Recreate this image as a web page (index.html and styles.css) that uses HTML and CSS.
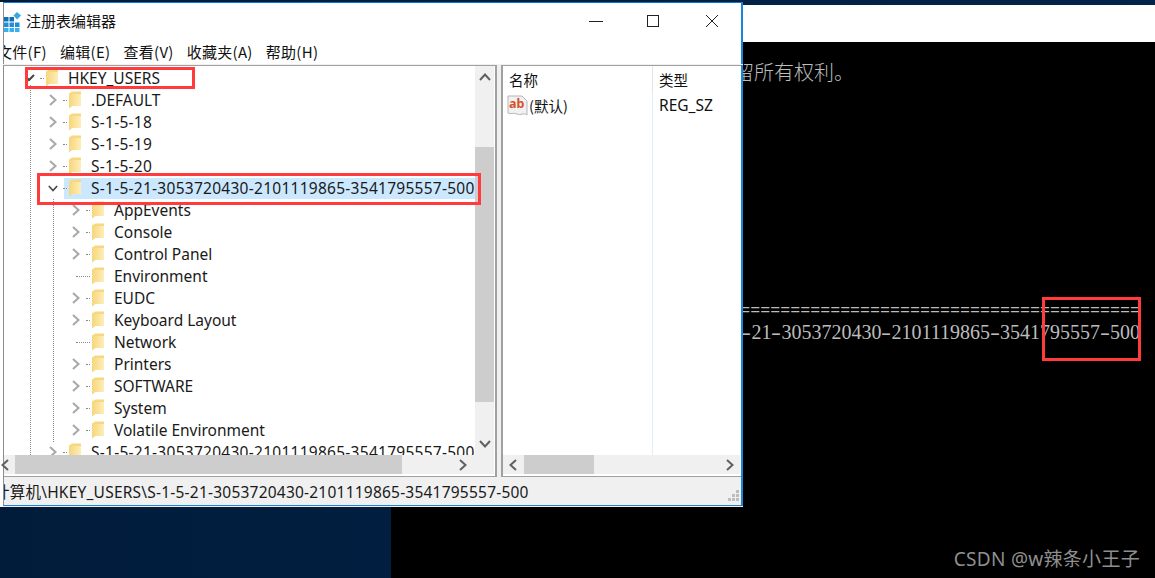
FILE: index.html
```html
<!DOCTYPE html>
<html lang="zh-CN">
<head>
<meta charset="utf-8">
<title>注册表编辑器</title>
<link rel="stylesheet" href="styles.css">
</head>
<body>
<svg class="defs" width="0" height="0" aria-hidden="true">
  <defs>
    <linearGradient id="fg" x1="0" y1="0" x2="1" y2="0">
      <stop offset="0" stop-color="#f7d67c"/><stop offset="1" stop-color="#fdeeb8"/>
    </linearGradient>
    <symbol id="folder" viewBox="0 0 12 18">
      <path d="M0 2.5 L3 0.5 H12 V15 H3 L0 17.5Z" fill="#f7d87f"/>
      <path d="M3 3 H12 V15 H3 L0 17.5 V5.5Z" fill="url(#fg)"/>
    </symbol>
    <symbol id="right" viewBox="0 0 8 12"><path d="M1 1 L6.5 6 L1 11" fill="none" stroke="currentColor" stroke-width="2"/></symbol>
    <symbol id="left" viewBox="0 0 8 12"><path d="M7 1 L1.5 6 L7 11" fill="none" stroke="currentColor" stroke-width="2"/></symbol>
    <symbol id="up" viewBox="0 0 12 8"><path d="M1 7 L6 1.5 L11 7" fill="none" stroke="currentColor" stroke-width="2"/></symbol>
    <symbol id="down" viewBox="0 0 12 8"><path d="M1 1 L6 6.5 L11 1" fill="none" stroke="currentColor" stroke-width="2"/></symbol>
  </defs>
</svg>

<main class="desktop">
  <section class="console">
    <div class="console-title"></div>
    <div class="console-body">
      <div class="c-line c-rights">保留所有权利。</div>
      <div class="c-line c-rule">=======================================================================================</div>
      <div class="c-line c-sid">S<span class="dash">-</span>1<span class="dash">-</span>5<span class="dash">-</span>21<span class="dash">-</span>3053720430<span class="dash">-</span>2101119865<span class="dash">-</span>3541795557<span class="dash">-</span>500</div>
    </div>
  </section>

  <section class="regedit">
    <header class="titlebar">
      <svg class="app-icon" width="18" height="20" viewBox="0 0 18 20">
        <g fill="#1e8fd8">
          <rect x="0" y="5" width="4.5" height="4.5" fill="#0f6fb8"/><rect x="5.5" y="5" width="4.5" height="4.5" fill="#0f6fb8"/>
          <rect x="0" y="10.5" width="4.5" height="4.5"/><rect x="5.5" y="10.5" width="4.5" height="4.5"/><rect x="11" y="10.5" width="4.5" height="4.5"/>
          <rect x="0" y="16" width="4.5" height="4" fill="#36b1ee"/><rect x="5.5" y="16" width="4.5" height="4" fill="#36b1ee"/><rect x="11" y="16" width="4.5" height="4" fill="#36b1ee"/>
        </g>
        <path d="M13 0 L17 3.5 L13 7.5 L9.5 3.5Z" fill="#3ba7e0"/>
      </svg>
      <span class="app-title">注册表编辑器</span>
      <div class="win-btns">
        <svg class="btn-min" width="14" height="14" viewBox="0 0 14 14"><path d="M0 7.5 H14" stroke="#222" fill="none"/></svg>
        <svg class="btn-max" width="13" height="13" viewBox="0 0 13 13"><rect x="1.5" y="1.5" width="11" height="11" stroke="#222" fill="none"/></svg>
        <svg class="btn-close" width="14" height="14" viewBox="0 0 14 14"><path d="M1 1 L13 13 M13 1 L1 13" stroke="#222" fill="none"/></svg>
      </div>
    </header>
    <nav class="menubar">
      <span class="m1">文件(F)</span><span class="m2">编辑(E)</span><span class="m3">查看(V)</span><span class="m4">收藏夹(A)</span><span class="m5">帮助(H)</span>
    </nav>

    <div class="panes">
      <div class="pane pane-tree">
        <div class="tree">
          <i class="guide g0"></i><i class="guide g1"></i>
          <div class="row l0"><svg class="exp0" width="14" height="8" viewBox="0 0 14 8"><path d="M3 3 L6 6 L11 1" fill="none" stroke="#444" stroke-width="2"/></svg><i class="twig"></i><span class="node"><svg class="fld"><use href="#folder"/></svg><span>HKEY_USERS</span></span></div>
          <div class="row l1"><svg class="chev"><use href="#right"/></svg><i class="twig"></i><span class="node"><svg class="fld"><use href="#folder"/></svg><span>.DEFAULT</span></span></div>
          <div class="row l1"><svg class="chev"><use href="#right"/></svg><i class="twig"></i><span class="node"><svg class="fld"><use href="#folder"/></svg><span class="num">S-1-5-18</span></span></div>
          <div class="row l1"><svg class="chev"><use href="#right"/></svg><i class="twig"></i><span class="node"><svg class="fld"><use href="#folder"/></svg><span class="num">S-1-5-19</span></span></div>
          <div class="row l1"><svg class="chev"><use href="#right"/></svg><i class="twig"></i><span class="node"><svg class="fld"><use href="#folder"/></svg><span class="num">S-1-5-20</span></span></div>
          <div class="row l1 sel"><svg class="chev open"><use href="#down"/></svg><i class="twig"></i><span class="node"><svg class="fld"><use href="#folder"/></svg><span class="num">S-1-5-21-3053720430-2101119865-3541795557-500</span></span></div>
          <div class="row l2"><svg class="chev"><use href="#right"/></svg><i class="twig"></i><span class="node"><svg class="fld"><use href="#folder"/></svg><span>AppEvents</span></span></div>
          <div class="row l2"><svg class="chev"><use href="#right"/></svg><i class="twig"></i><span class="node"><svg class="fld"><use href="#folder"/></svg><span>Console</span></span></div>
          <div class="row l2"><svg class="chev"><use href="#right"/></svg><i class="twig"></i><span class="node"><svg class="fld"><use href="#folder"/></svg><span>Control Panel</span></span></div>
          <div class="row l2"><svg class="chev"></svg><i class="twig long"></i><span class="node"><svg class="fld"><use href="#folder"/></svg><span>Environment</span></span></div>
          <div class="row l2"><svg class="chev"><use href="#right"/></svg><i class="twig"></i><span class="node"><svg class="fld"><use href="#folder"/></svg><span>EUDC</span></span></div>
          <div class="row l2"><svg class="chev"><use href="#right"/></svg><i class="twig"></i><span class="node"><svg class="fld"><use href="#folder"/></svg><span>Keyboard Layout</span></span></div>
          <div class="row l2"><svg class="chev"></svg><i class="twig long"></i><span class="node"><svg class="fld"><use href="#folder"/></svg><span>Network</span></span></div>
          <div class="row l2"><svg class="chev"><use href="#right"/></svg><i class="twig"></i><span class="node"><svg class="fld"><use href="#folder"/></svg><span>Printers</span></span></div>
          <div class="row l2"><svg class="chev"><use href="#right"/></svg><i class="twig"></i><span class="node"><svg class="fld"><use href="#folder"/></svg><span>SOFTWARE</span></span></div>
          <div class="row l2"><svg class="chev"><use href="#right"/></svg><i class="twig"></i><span class="node"><svg class="fld"><use href="#folder"/></svg><span>System</span></span></div>
          <div class="row l2"><svg class="chev"><use href="#right"/></svg><i class="twig"></i><span class="node"><svg class="fld"><use href="#folder"/></svg><span>Volatile Environment</span></span></div>
          <div class="row l1"><svg class="chev"><use href="#right"/></svg><i class="twig"></i><span class="node"><svg class="fld"><use href="#folder"/></svg><span class="num">S-1-5-21-3053720430-2101119865-3541795557-500</span></span></div>
        </div>
        <div class="vscroll">
          <svg class="arrow-v"><use href="#up"/></svg>
          <div class="vtrack"><div class="vthumb"></div></div>
          <svg class="arrow-v"><use href="#down"/></svg>
        </div>
        <div class="hscroll hs-tree">
          <svg class="arrow-h"><use href="#left"/></svg>
          <div class="htrack"><div class="hthumb ht-tree"></div></div>
          <svg class="arrow-h"><use href="#right"/></svg>
        </div>
      </div>

      <div class="pane pane-list">
        <div class="list-head"><span class="col-a">名称</span><span class="col-b">类型</span></div>
        <div class="list-body">
          <div class="list-row">
            <span class="col-a name-cell">
              <svg class="ab-icon" width="21" height="21" viewBox="0 0 21 21">
                <path d="M1 1 H15 L20 6 V20 C16 17 14 21 10 19 C6 17 4 20 1 18Z" fill="#f1f1f1" stroke="#b5b5b5"/>
                <text x="2" y="13" class="ab-text">ab</text>
              </svg>
              <span>(默认)</span>
            </span>
            <span class="col-b">REG_SZ</span>
          </div>
        </div>
        <div class="hscroll hs-list">
          <svg class="arrow-h"><use href="#left"/></svg>
          <div class="htrack"><div class="hthumb ht-list"></div></div>
          <svg class="arrow-h"><use href="#right"/></svg>
        </div>
      </div>
    </div>

    <footer class="statusbar">
      <span class="path">计算机\HKEY_USERS\S-1-5-21-3053720430-2101119865-3541795557-500</span>
      <svg class="grip" width="12" height="12" viewBox="0 0 12 12" fill="#bdbdbd">
        <rect x="8" y="0" width="3" height="3"/><rect x="4" y="4" width="3" height="3"/><rect x="8" y="4" width="3" height="3"/>
        <rect x="0" y="8" width="3" height="3"/><rect x="4" y="8" width="3" height="3"/><rect x="8" y="8" width="3" height="3"/>
      </svg>
    </footer>
  </section>

  <div class="mark mark-root"></div>
  <div class="mark mark-sid"></div>
  <div class="mark mark-console"></div>
  <div class="watermark">CSDN @w辣条小王子</div>
</main>
</body>
</html>
```
FILE: styles.css
```css
* { box-sizing: border-box; }
html, body { margin: 0; height: 100%; overflow: hidden; }
.defs { position: absolute; }
body { font-family: "Noto Sans", "Noto Sans CJK SC", sans-serif; }

.desktop {
  position: relative;
  width: 1155px;
  height: 578px;
  overflow: hidden;
  background: linear-gradient(90deg, #011c3b, #02234a);
}

/* console window behind */
.console {
  position: absolute;
  left: 391px;
  top: 5px;
  width: 764px;
  height: 573px;
  display: flex;
  flex-direction: column;
}
.console-title { height: 37px; background: #fff; }
.console-body {
  flex: 1;
  background: #000;
  color: #bcbcbc;
  position: relative;
  overflow: hidden;
  padding-right: 15px;
}
.c-line { white-space: nowrap; overflow: hidden; text-align: right; }
.c-rights {
  font: 300 20px/24px "Noto Sans CJK SC", sans-serif;
  margin-top: 18px;
  width: 463px;
  color: #bdbdbd;
}
.c-rule {
  font: 16.67px/16px "Liberation Mono", monospace;
  margin-top: 219px;
  direction: rtl;
}
.c-sid {
  font: 20px/24px "Liberation Serif", serif;
  margin-top: 1px;
}
.dash {
  display: inline-block;
  width: 10px;
  text-align: center;
  transform: scaleX(1.5);
}

/* registry editor */
.regedit {
  position: absolute;
  left: 0;
  top: 2px;
  width: 743px;
  height: 505px;
  padding-left: 3px;
  display: flex;
  flex-direction: column;
  background: linear-gradient(90deg, #fff 3px, #f0f0f0 3px);
  color: #111;
  font-size: 15.5px;
}
.regedit > * { border-left: 1px solid #8d8d8d; border-right: 2px solid #1a84d8; }
.titlebar {
  height: 38px;
  flex: none;
  background: #fff;
  border-top: 1px solid #0a78d4;
  padding-bottom: 2px;
  display: flex;
  align-items: center;
}
.app-icon { margin-top: 2px; flex: none; }
.app-title {
  margin-left: 4px;
  font: 15px "Noto Sans CJK SC", sans-serif;
  color: #111;
}
.win-btns {
  margin-left: auto;
  margin-right: 22px;
  display: flex;
  align-items: center;
}
.btn-max { margin-left: 43px; }
.btn-close { margin-left: 46px; }
.menubar {
  height: 24px;
  flex: none;
  background: #fff;
  padding-bottom: 2px;
  display: flex;
  align-items: center;
  white-space: nowrap;
  overflow: hidden;
  font: 15px "Noto Sans CJK SC", sans-serif;
  letter-spacing: .3px;
  gap: 13px;
}
.m1 { margin-left: -7px; }
.panes {
  height: 412px;
  flex: none;
  margin-top: 1px;
  display: flex;
  gap: 4px;
  background: #f0f0f0;
}
.pane {
  background: #fff;
  border-top: 1px solid #a0a0a0;
  border-bottom: 1px solid #a0a0a0;
  padding-bottom: 2px;
  flex: none;
}
.pane-tree {
  width: 493px;
  border-right: 2px solid #a0a0a0;
  display: grid;
  grid-template-columns: 471px 19px;
  grid-template-rows: 1fr 19px;
}
.tree {
  position: relative;
  overflow: hidden;
  padding-top: 1px;
}
.guide {
  position: absolute;
  width: 0;
  border-left: 1px dotted #8a8a8a;
}
.g0 { left: 26px; top: 19px; bottom: 0; }
.g1 { left: 49px; top: 133px; height: 243px; }
.row {
  height: 22px;
  display: flex;
  align-items: center;
  white-space: nowrap;
  color: #1a1a1a;
}
.l0 { padding-left: 19px; }
.l1 { padding-left: 42px; }
.l2 { padding-left: 65px; }
.chev {
  width: 14px;
  height: 12px;
  flex: none;
  color: #a8a8a8;
  overflow: visible;
}
.exp0 { flex: none; }
.chev.open { color: #4a4a4a; width: 10px; height: 7px; margin: 0 2px; }
.twig {
  width: 4px;
  height: 0;
  flex: none;
  margin: 0 -3px 0 3px;
  border-top: 1px dotted #8a8a8a;
  position: relative;
  z-index: 1;
}
.twig.long { width: 14px; margin: 0 -3px 0 -7px; }
.node {
  display: flex;
  align-items: center;
  height: 21px;
  padding-left: 5px;
  flex: 1;
}
.num { letter-spacing: .27px; }
.sel .node { background: #cce8ff; }
.fld { width: 12px; height: 18px; flex: none; margin-right: 10px; }

.vscroll {
  background: #f0f0f0;
  display: flex;
  flex-direction: column;
  grid-row: 1 / 3;
  grid-column: 2;
  align-items: center;
  padding: 7px 0 26px;
}
.arrow-v { width: 12px; height: 8px; color: #606060; flex: none; }
.vtrack { flex: 1; align-self: stretch; padding-top: 66px; }
.vthumb { height: 255px; background: #cdcdcd; }
.hscroll {
  height: 19px;
  background: #f0f0f0;
  display: flex;
  align-items: center;
}
.hs-tree { grid-row: 2; grid-column: 1; }
.arrow-h { width: 8px; height: 12px; color: #606060; flex: none; }
.htrack { flex: 1; height: 100%; }
.hthumb { height: 100%; background: #cdcdcd; }
.hs-tree .arrow-h:first-child { margin-left: -3px; }
.hs-tree .arrow-h:last-child { margin-right: 8px; }
.ht-tree { width: 387px; margin-left: 6px; }
.hs-list .arrow-h:first-child { margin-left: 6px; }
.hs-list .arrow-h:last-child { margin-right: 6px; }
.ht-list { width: 70px; margin-left: 7px; }

.pane-list {
  flex: 1;
  border-left: 2px solid #a0a0a0;
  display: flex;
  flex-direction: column;
}
.list-head, .list-row { display: flex; }
.list-head {
  height: 26px;
  align-items: center;
  font: 14.5px "Noto Sans CJK SC", sans-serif;
}
.col-a { width: 156px; padding-left: 6px; flex: none; display: flex; align-items: center; }
.list-head .col-a { border-right: 1px solid #e5e5e5; height: 100%; width: 150px; margin-right: 6px; }
.list-body {
  flex: 1;
  background: linear-gradient(90deg, #fff 149px, #e3edf9 149px, #e3edf9 150px, #fff 150px);
}
.list-row { height: 26px; align-items: center; }
.name-cell { padding-left: 4px; }
.ab-icon { flex: none; margin-right: 1px; }
.ab-text { font: 700 12.5px "Noto Sans", sans-serif; fill: #d9512c; }
.name-cell span { font-family: "Noto Sans CJK SC", sans-serif; font-size: 14.5px; }
.hs-list { margin-right: 1px; }

.statusbar {
  height: 29px;
  flex: none;
  background: #f0f0f0;
  border-bottom: 1px solid #1a84d8;
  display: flex;
  align-items: center;
  overflow: hidden;
  white-space: nowrap;
  position: relative;
}
.path { margin-left: -10px; color: #1a1a1a; letter-spacing: .22px; }
.grip { position: absolute; right: 1px; bottom: 3px; }

/* annotations */
.mark { position: absolute; border: 3px solid #ff3b3b; pointer-events: none; }
.mark-root { left: 25px; top: 67px; width: 170px; height: 22px; }
.mark-sid { left: 37px; top: 173px; width: 444px; height: 32px; }
.mark-console { left: 1042px; top: 297px; width: 99px; height: 64px; }
.watermark {
  position: absolute;
  right: 15px;
  top: 544px;
  font: 19px "Noto Sans", "Noto Sans CJK SC", sans-serif;
  letter-spacing: .3px;
  color: #8f8f8f;
}
```
